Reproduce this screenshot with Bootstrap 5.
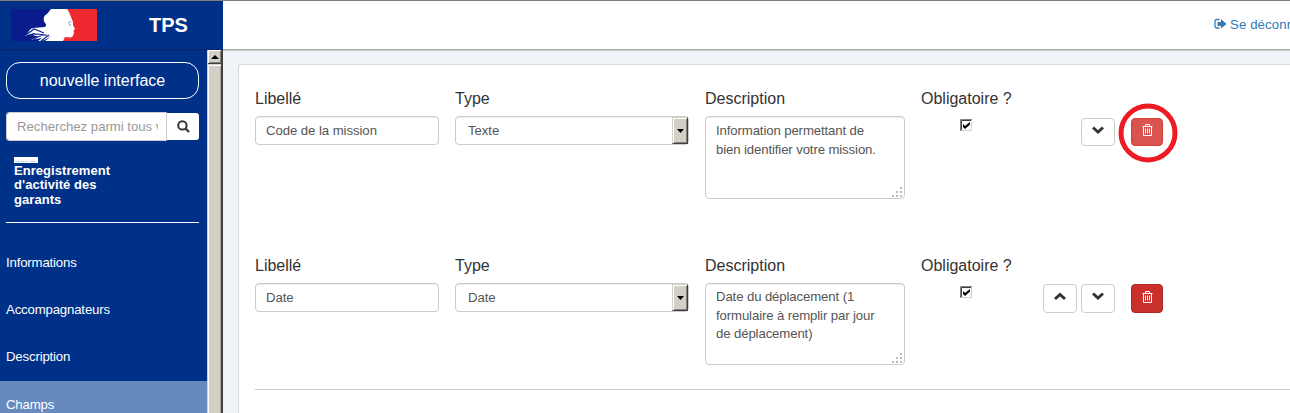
<!DOCTYPE html>
<html lang="fr">
<head>
<meta charset="utf-8">
<meta name="viewport" content="width=device-width, initial-scale=1">
<title>TPS</title>
<link href="https://cdn.jsdelivr.net/npm/bootstrap@5.3.0/dist/css/bootstrap.min.css" rel="stylesheet">
<style>
html, body { height: 100%; overflow: hidden; }
body { font: 13.2px/19px "Liberation Sans", Arial, sans-serif; color: #333; background: #f0f4f9; border-top: 1px solid #808080; }
.topbar { height: 49px; background: #fff; border-bottom: 1px solid #aaa; box-shadow: 0 1px 1px #ccc; position: relative; z-index: 2; }
.brand { width: 223px; height: 49px; background: #003189; padding-left: 11px; border-bottom: 1px solid #0a2764; box-shadow: 0 1px #052c78, 0 2px #003189; clip-path: inset(0 0 -2px 0); }
.brand strong { font-size: 20px; line-height: 24px; margin-left: 52px; }
.logout { width: 76px; color: #337ab7; white-space: nowrap; overflow: hidden; gap: 3px; letter-spacing: .12px; padding-bottom: 2px; }
.workspace { min-height: 0; }
.side { width: 207px; background: #003189; color: #fff; overflow: hidden; }
.side-top { padding: 12px 8px 0 6px; }
.pill { height: 37px; border: 1px solid #fff; border-radius: 14px; color: #fff; font-size: 16px; line-height: 35px; padding: 0; width: 193px; }
.search { margin-top: 13px; width: 193px; }
.search .form-control { height: 29px; border: 1px solid #ccc; border-radius: 3px 0 0 3px; padding: 4px 8px 4px 10px; font-size: 13.2px; letter-spacing: -.02px; }
.search .form-control::placeholder { color: #999; }
.search .btn { width: 32px; height: 27px; margin: 1px 0 0 0 !important; background: #fff; border: 0; border-radius: 0 3px 3px 0; padding: 0 0 2px; }
.proc { margin: 16px 0 0 8px; width: 125px; font-size: 13px; line-height: 14.4px; font-weight: bold; letter-spacing: .05px; }
.thumb { width: 24px; height: 6px; display: block; background: #fff; margin-bottom: 1px; }
.rule { height: 1px; background: #fff; margin-top: 14.3px; width: 193px; }
.side-nav { padding-top: 17px; }
.side-nav a { color: #fff; height: 47px; padding: 0 6px 2px; display: flex; align-items: center; text-decoration: none; letter-spacing: -.16px; }
.side-nav a.active { background: #678abe; color: #fff; padding-bottom: 0; }
.vscroll { width: 16px; background: #d4d0c8; border-left: 1px solid #d4d0c8; border-right: 2px solid #404040; position: relative; z-index: 3; }
.vscroll i { display: block; height: 14px; border-bottom: 1px solid #404040; box-shadow: inset 1px 1px #fff, inset -1px -1px #808080; }
.vscroll b { flex: 1; margin-top: 1px; box-shadow: inset 1px 1px #fff, inset -1px 0 #aaa59d; }
.panel { margin: 14px 0 0 15px; background: #fff; border: 1px solid #d5dce3; border-right: 0; border-bottom: 0; border-radius: 3px 0 0 0; padding: 24px 0 0 16px; }
.field-row { height: 167px; gap: 16px; }
.field-row.second { height: 133px; }
.field-row label { display: block; font-size: 16px; line-height: 20px; margin-bottom: 7px; white-space: nowrap; }
.f-name { width: 184px; } .f-type { width: 234px; } .f-desc { width: 200px; } .f-req { width: 91px; }
.field-row .form-control { height: 29px; border: 1px solid #ccc; border-radius: 4px; font-size: 13.2px; line-height: 19px; color: #555; padding: 4px 10px; box-shadow: inset 0 1px 1px rgba(0,0,0,.08); letter-spacing: -.07px; }
.field-row select.form-control { padding-left: 12px; }
.field-row textarea.form-control { height: 83px; line-height: 18.5px; padding: 5px 18px 4px 10px; resize: none; overflow: hidden; letter-spacing: -.12px; }
.field-row.second textarea.form-control { height: 82px; padding-top: 4px; }
.drop { position: absolute; right: 1px; top: 1px; width: 16px; height: 27px; background: #d4d0c8; border: 1px solid; border-color: #d4d0c8 #404040 #404040 #d4d0c8; box-shadow: inset 1px 1px #fff, inset -1px -1px #808080; pointer-events: none; }
.drop svg { position: absolute; left: 4px; top: 11px; }
.grip { position: absolute; right: 2px; bottom: 1px; }
.tick { display: block; width: 12px; height: 12px; margin: 10px 0 0 39px; }
.acts { padding-top: 29px; width: 120px; margin-left: 15px; gap: 4px; }
.second .acts { padding-top: 28px; }
.acts .btn { width: 34px; height: 28px; border: 1px solid #ccc; border-radius: 4px; padding: 0 0 3px; background: #fff; display: flex; align-items: center; justify-content: center; }
.second .acts .btn { height: 29px; padding-bottom: 4px; }
.acts .btn-danger { width: 32px; margin-left: 12px; background: #c9302c; border-color: #ac2925; padding-bottom: 4px; position: relative; }
.acts .btn-danger.hot { background: #d9534f; border-color: #d43f3a; }
.ring { position: absolute; left: -14px; top: -16px; overflow: visible; }
.divider { height: 1px; background: #ccc; }
</style>
</head>
<body class="d-flex flex-column">
<header class="topbar d-flex justify-content-between flex-shrink-0">
  <div class="brand d-flex align-items-center text-white">
    <svg width="86" height="32" viewBox="0 0 86 32">
      <rect width="86" height="32" fill="#0a1c8c"/>
      <path fill="#ee2a30" d="M50 0h36v32H50z"/>
      <path fill="#fff" d="M40 0H56L58 3 60 8 62 13 62 16 64 20 62.500 21.500 63 24 62 27 60 28.500 54 28 52 32H34C37 30 39 28 40 26C37 30 32 32 27 32L31 29 20 31 28 27 20 27 25 24C20 24 18 26 14 27C18 23 18 20 22 19L34 18C37 15 33 14 33 12C32 8 34 6 36 5Z"/>
      <path d="M15 26l8-6 10 4M18 28l8-3 8 1M22 31c5-4 9-5 14-5M30 32l8-6" fill="none" stroke="#0a1c8c" stroke-width="1.100"/>
      <path d="M57 14l3-1.500M58 16h2" fill="none" stroke="#8b8b96"/>
    </svg>
    <strong>TPS</strong>
  </div>
  <div class="logout d-flex align-items-center">
    <svg class="flex-shrink-0" width="13" height="12" viewBox="0 0 13 12"><path d="M5.500 1.500h-3Q1 1.500 1 3v5.500Q1 10 2.500 10h3" fill="none" stroke="#337ab7" stroke-width="1.300"/><path d="M3.500 4H7V1l5.500 5L7 10.500V8H3.500z" fill="#337ab7"/></svg>
    <span>Se déconnecter</span>
  </div>
</header>
<div class="workspace d-flex flex-grow-1">
  <aside class="side flex-shrink-0">
    <div class="side-top">
      <a class="pill btn d-block" href="#">nouvelle interface</a>
      <div class="search input-group flex-nowrap">
        <input class="form-control" placeholder="Recherchez parmi tous vos dossiers">
        <button class="btn" type="button" aria-label="Rechercher"><svg width="13" height="13" viewBox="0 0 13 13" fill="none" stroke="#333"><circle cx="5.400" cy="5.400" r="4.200" stroke-width="2"/><path d="M8.500 8.500l3.500 3.500" stroke-width="2.300"/></svg></button>
      </div>
      <div class="proc">
        <svg class="thumb" viewBox="0 0 24 6"><path d="M1 4.500h7m1 0h5m2 0h6" stroke="#b4c9d6" stroke-width=".7"/></svg>
        Enregistrement d'activité des garants
      </div>
      <div class="rule"></div>
    </div>
    <nav class="side-nav">
      <a href="#">Informations</a>
      <a href="#">Accompagnateurs</a>
      <a href="#">Description</a>
      <a href="#" class="active">Champs</a>
    </nav>
  </aside>
  <div class="vscroll d-flex flex-column flex-shrink-0"><i><svg class="d-block mx-auto" width="8" height="14" viewBox="0 0 8 14"><path d="M0 9h8L4 5z"/></svg></i><b></b></div>
  <main class="panel flex-grow-1">
    <div class="field-row d-flex">
      <div class="f-name"><label>Libellé</label><input class="form-control" value="Code de la mission"></div>
      <div class="f-type"><label>Type</label><div class="position-relative"><select class="form-control"><option>Texte</option></select><span class="drop"><svg width="7" height="4" viewBox="0 0 7 4"><path d="M0 0h7L3.500 4z"/></svg></span></div></div>
      <div class="f-desc"><label>Description</label><div class="position-relative"><textarea class="form-control">Information permettant de
bien identifier votre mission.</textarea><svg class="grip" width="11" height="11" viewBox="0 0 11 11" fill="#bbb"><path d="M8 0h2v2H8zM4 4h2v2H4zM8 4h2v2H8zM0 8h2v2H0zM4 8h2v2H4zM8 8h2v2H8z"/></svg></div></div>
      <div class="f-req"><label>Obligatoire ?</label><svg class="tick" viewBox="0 0 12 12"><path fill="#fff" d="M0 0h12v12H0z"/><path d="M.5 12V.5H12" fill="none" stroke="#808080"/><path d="M1.500 11V1.500H11" fill="none" stroke="#404040"/><path d="M11.500 1v10.500H1" fill="none" stroke="#d4d0c8"/><path d="M3 5l2 2 5-4v2.500L5 10 3 8z"/></svg></div>
      <div class="acts d-flex justify-content-end">
        <button class="btn" aria-label="Descendre"><svg width="12" height="9" viewBox="0 0 12 9"><path d="M1 1.500l5 4.500 5-4.500" fill="none" stroke="#333" stroke-width="3"/></svg></button>
        <button class="btn btn-danger hot" aria-label="Supprimer"><svg width="11" height="12" viewBox="0 0 11 12" fill="none" stroke="#fff"><path d="M.5 2.500h10M3.500 2.500v-2h4v2M1.500 3v8.500h8V3M3.500 4.500v5M5.500 4.500v5M7.500 4.500v5"/></svg><svg class="ring" width="60" height="60" viewBox="0 0 60 60"><circle cx="30" cy="30" r="27" fill="none" stroke="#ed1c24" stroke-width="5"/></svg></button>
      </div>
    </div>
    <div class="field-row second d-flex">
      <div class="f-name"><label>Libellé</label><input class="form-control" value="Date"></div>
      <div class="f-type"><label>Type</label><div class="position-relative"><select class="form-control"><option>Date</option></select><span class="drop"><svg width="7" height="4" viewBox="0 0 7 4"><path d="M0 0h7L3.500 4z"/></svg></span></div></div>
      <div class="f-desc"><label>Description</label><div class="position-relative"><textarea class="form-control">Date du déplacement (1
formulaire à remplir par jour
de déplacement)</textarea><svg class="grip" width="11" height="11" viewBox="0 0 11 11" fill="#bbb"><path d="M8 0h2v2H8zM4 4h2v2H4zM8 4h2v2H8zM0 8h2v2H0zM4 8h2v2H4zM8 8h2v2H8z"/></svg></div></div>
      <div class="f-req"><label>Obligatoire ?</label><svg class="tick" viewBox="0 0 12 12"><path fill="#fff" d="M0 0h12v12H0z"/><path d="M.5 12V.5H12" fill="none" stroke="#808080"/><path d="M1.500 11V1.500H11" fill="none" stroke="#404040"/><path d="M11.500 1v10.500H1" fill="none" stroke="#d4d0c8"/><path d="M3 5l2 2 5-4v2.500L5 10 3 8z"/></svg></div>
      <div class="acts d-flex justify-content-end">
        <button class="btn" aria-label="Monter"><svg width="12" height="9" viewBox="0 0 12 9"><path d="M1 7l5-4.500L11 7" fill="none" stroke="#333" stroke-width="3"/></svg></button>
        <button class="btn" aria-label="Descendre"><svg width="12" height="9" viewBox="0 0 12 9"><path d="M1 1.500l5 4.500 5-4.500" fill="none" stroke="#333" stroke-width="3"/></svg></button>
        <button class="btn btn-danger" aria-label="Supprimer"><svg width="11" height="12" viewBox="0 0 11 12" fill="none" stroke="#fff"><path d="M.5 2.500h10M3.500 2.500v-2h4v2M1.500 3v8.500h8V3M3.500 4.500v5M5.500 4.500v5M7.500 4.500v5"/></svg></button>
      </div>
    </div>
    <div class="divider"></div>
  </main>
</div>
<script src="https://cdn.jsdelivr.net/npm/bootstrap@5.3.0/dist/js/bootstrap.bundle.min.js"></script>
</body>
</html>
